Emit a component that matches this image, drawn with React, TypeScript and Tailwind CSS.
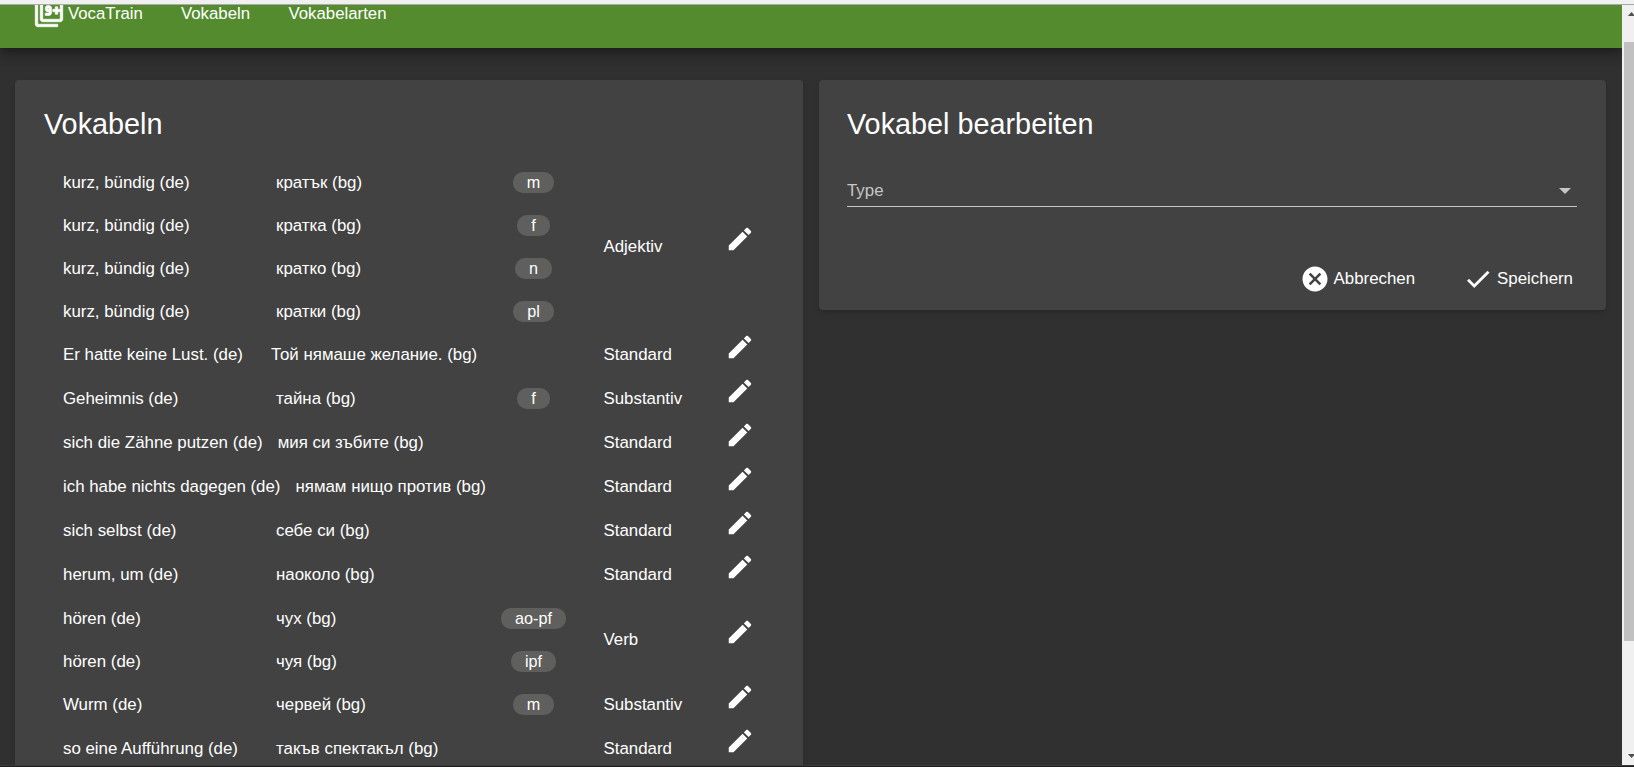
import React from "react";

type Entry = { de: string; bg: string; tag?: string };
type Group = { entries: Entry[]; kind: string; tight?: boolean };

const de = "kurz, bündig (de)";
const groups: Group[] = [
  {
    kind: "Adjektiv",
    entries: [
      { de, bg: "кратък (bg)", tag: "m" },
      { de, bg: "кратка (bg)", tag: "f" },
      { de, bg: "кратко (bg)", tag: "n" },
      { de, bg: "кратки (bg)", tag: "pl" },
    ],
  },
  { kind: "Standard", tight: true, entries: [{ de: "Er hatte keine Lust. (de)", bg: "Той нямаше желание. (bg)" }] },
  { kind: "Substantiv", entries: [{ de: "Geheimnis (de)", bg: "тайна (bg)", tag: "f" }] },
  { kind: "Standard", entries: [{ de: "sich die Zähne putzen (de)", bg: "мия си зъбите (bg)" }] },
  { kind: "Standard", entries: [{ de: "ich habe nichts dagegen (de)", bg: "нямам нищо против (bg)" }] },
  { kind: "Standard", entries: [{ de: "sich selbst (de)", bg: "себе си (bg)" }] },
  { kind: "Standard", entries: [{ de: "herum, um (de)", bg: "наоколо (bg)" }] },
  {
    kind: "Verb",
    entries: [
      { de: "hören (de)", bg: "чух (bg)", tag: "ao-pf" },
      { de: "hören (de)", bg: "чуя (bg)", tag: "ipf" },
    ],
  },
  { kind: "Substantiv", entries: [{ de: "Wurm (de)", bg: "червей (bg)", tag: "m" }] },
  { kind: "Standard", entries: [{ de: "so eine Aufführung (de)", bg: "такъв спектакъл (bg)" }] },
];

function Icon({ d, className }: { d: string; className: string }) {
  return (
    <svg viewBox="0 0 24 24" fill="currentColor" className={className}>
      <path d={d} />
    </svg>
  );
}

const PENCIL =
  "M3 17.25V21h3.75L17.81 9.94l-3.75-3.75L3 17.25zM20.71 7.04c.39-.39.39-1.02 0-1.41l-2.34-2.34c-.39-.39-1.02-.39-1.41 0l-1.83 1.83 3.75 3.75 1.83-1.83z";
const CANCEL =
  "M12 2C6.47 2 2 6.47 2 12s4.47 10 10 10 10-4.47 10-10S17.53 2 12 2zm5 13.59L15.59 17 12 13.41 8.41 17 7 15.59 10.59 12 7 8.41 8.41 7 12 10.59 15.59 7 17 8.41 13.41 12 17 15.59z";
const CHECK = "M9 16.17L4.83 12l-1.42 1.41L9 19 21 7l-1.41-1.41z";
const FILTER_9_PLUS =
  "M3 5H1v16c0 1.1.9 2 2 2h16v-2H3V5zm11 7V8c0-1.11-.9-2-2-2h-1c-1.1 0-2 .89-2 2v1c0 1.11.9 2 2 2h1v1H9v2h3c1.1 0 2-.89 2-2zm-3-3V8h1v1h-1zm10-8H7c-1.1 0-2 .9-2 2v14c0 1.1.9 2 2 2h14c1.1 0 2-.9 2-2V3c0-1.1-.9-2-2-2zm0 8h-2V7h-2v2h-2v2h2v2h2v-2h2v6H7V3h14v6z";

function VocabGroup({ group }: { group: Group }) {
  const single = group.entries.length === 1;
  return (
    <div className="flex items-center">
      <div className="w-[528px] shrink-0">
        {group.entries.map((e, i) => (
          <div key={i} className={single ? "flex h-11" : "flex h-[43px]"}>
            <div className={group.tight ? "w-[208px] shrink-0 pt-3" : "min-w-[213px] shrink-0 pr-[15px] pt-3"}>{e.de}</div>
            <div className="grow pt-3">{e.bg}</div>
            {e.tag && (
              <div className="flex w-[115px] shrink-0 justify-center pt-[11px]">
                <span className="h-[21px] rounded-[10px] bg-[#5f5f5d] px-[14.2px] text-[16.2px] leading-[21px]">{e.tag}</span>
              </div>
            )}
          </div>
        ))}
      </div>
      <div className={single ? "ml-[12.5px] flex h-11 w-[121.5px] shrink-0" : "ml-[12.5px] flex h-[45px] w-[121.5px] shrink-0"}>
        <span className="pt-3">{group.kind}</span>
      </div>
      <div className={single ? "h-11" : "h-[47px]"}>
        <Icon d={PENCIL} className={single ? "-mt-px size-[30px]" : "size-[30px]"} />
      </div>
    </div>
  );
}

export default function App() {
  return (
    <div className="flex h-[767px] w-[1634px] flex-col overflow-hidden bg-[#303030] font-['Liberation_Sans',Arial,sans-serif] text-[16.87px] leading-5 whitespace-nowrap text-white">
      <div className="h-[5px] shrink-0 border-b border-[#a8a8a8] bg-[#f0f0f0]" />
      <div className="flex min-h-0 grow">
        <div className="flex w-[1622px] flex-col overflow-hidden">
          <header className="relative h-[43px] shrink-0 bg-[#558b2f] shadow-[0_5px_5px_-3px_rgba(0,0,0,0.2),0_8px_10px_1px_rgba(0,0,0,0.14),0_3px_14px_2px_rgba(0,0,0,0.12)]">
            <nav className="flex h-[43px] items-start overflow-hidden pl-[34px]">
              <svg viewBox="0 0 24 24" fill="currentColor" stroke="currentColor" strokeWidth="0.5" className="-mt-[7px] size-[30px]">
                <path d={FILTER_9_PLUS} />
              </svg>
              <span className="-mt-[1px] ml-1 w-[113px] text-[16.8px]">VocaTrain</span>
              <span className="-mt-[1px] w-[107.5px] text-[16.8px]">Vokabeln</span>
              <span className="-mt-[1px] text-[16.8px]">Vokabelarten</span>
            </nav>
          </header>
          <main className="flex min-h-0 grow items-start gap-4 px-[15px] pt-8">
            <section className="w-[788px] shrink-0 rounded-[4px] bg-[#424242] pt-7 pl-[29px] shadow-md">
              <h1 className="text-[28.8px] leading-8">Vokabeln</h1>
              <div className="pt-[21px] pl-[19px]">
                {groups.map((g, i) => (
                  <VocabGroup key={i} group={g} />
                ))}
              </div>
            </section>
            <section className="h-[230px] w-[787px] shrink-0 rounded-[4px] bg-[#424242] pr-[29px] pl-7 pt-7 shadow-md">
              <h1 className="text-[28.8px] leading-8">Vokabel bearbeiten</h1>
              <div className="mt-[41px] flex h-[26px] items-start justify-between border-b border-[#c6c6c6] pr-[6px] text-[#c6c6c6]">
                <span>Type</span>
                <svg viewBox="0 0 12 6" className="mt-[7px] h-[6px] w-3" fill="currentColor">
                  <path d="M0 0h12L6 6z" />
                </svg>
              </div>
              <div className="mt-[57px] flex items-center justify-end pr-1">
                <Icon d={CANCEL} className="size-[30px]" />
                <span className="ml-1 w-[129.5px]">Abbrechen</span>
                <svg viewBox="0 0 24 24" fill="currentColor" stroke="currentColor" strokeWidth="0.3" className="size-[30px]">
                  <path d={CHECK} />
                </svg>
                <span className="ml-1">Speichern</span>
              </div>
            </section>
          </main>
        </div>
        <aside className="flex w-3 flex-col overflow-hidden bg-[#f0f0f0]">
          <svg viewBox="0 0 9 5" className="mt-[7px] ml-[5px] h-[4px] w-[9px] shrink-0" fill="#505050">
            <path d="M0 5 4.5 0 9 5z" />
          </svg>
          <div className="mt-[26px] ml-0.5 h-[599px] shrink-0 bg-[#c1c1c1]" />
          <svg viewBox="0 0 9 5" className="mt-[113px] ml-[5px] h-[4px] w-[9px] shrink-0" fill="#505050">
            <path d="M0 0h9L4.5 5z" />
          </svg>
        </aside>
      </div>
      <div className="h-0.5 shrink-0 border-t border-[#3a3a3a] bg-[#1e1e1e]" />
    </div>
  );
}
